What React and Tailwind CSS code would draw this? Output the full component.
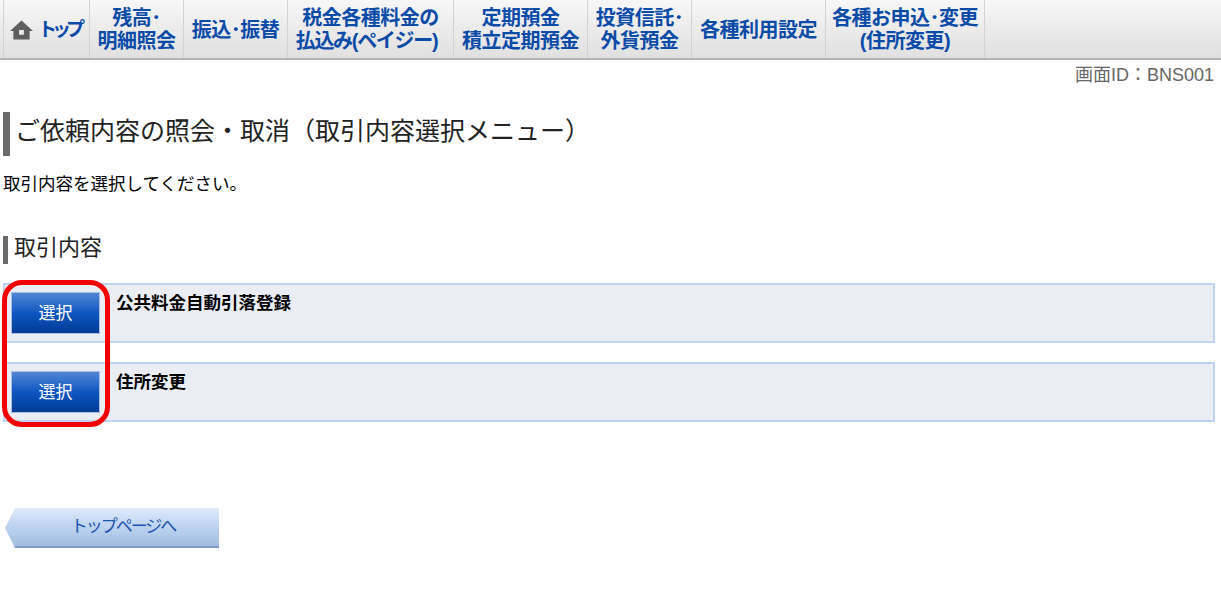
const navItems = [
  { w: "w-[94px]", lines: ["残高･", "明細照会"] },
  { w: "w-[104px]", lines: ["振込･振替"] },
  { w: "w-[166px]", lines: ["税金各種料金の", "払込み(ペイジー)"] },
  { w: "w-[134px]", lines: ["定期預金", "積立定期預金"] },
  { w: "w-[104px]", lines: ["投資信託･", "外貨預金"] },
  { w: "w-[134px]", lines: ["各種利用設定"] },
  { w: "w-[159px]", lines: ["各種お申込･変更", "(住所変更)"] },
];

const rows = ["公共料金自動引落登録", "住所変更"];

export default function App() {
  return (
    <div className="relative h-[601px] w-[1221px] overflow-hidden bg-white font-['Liberation_Sans','Noto_Sans_CJK_JP',sans-serif] text-black">
      {/* global nav */}
      <div className="flex h-[60px] border-b-2 border-[#b5b5b5] bg-gradient-to-b from-[#f7f7f7] to-[#e0e0e0] pl-[3px]">
        <div className="flex w-[87px] items-center justify-center gap-[5px] border-x border-[#d2d2d2] pt-[2px] pr-[3px]">
          <svg width="23" height="20" viewBox="0 0 24 20" className="shrink-0">
            <path fill="#5f5f5f" fillRule="evenodd" d="M12 0 24 11h-3.500v9h-17v-9H0ZM9.500 10v5h5v-5Z" />
          </svg>
          <span className="text-[19px] font-bold tracking-[-5px] text-[#0b4ba8]">トップ</span>
        </div>
        {navItems.map((item) => (
          <div
            key={item.lines[0]}
            className={`flex ${item.w} shrink-0 flex-col items-center justify-center border-r border-[#d2d2d2] pt-[2px] text-[20px] leading-[23px] font-bold tracking-[-0.5px] whitespace-nowrap text-[#0b4ba8]`}
          >
            {item.lines.map((line) => (
              <span key={line} className={line.includes("ペイジー") ? "pr-[8px] tracking-[-1.300px]" : ""}>
                {line}
              </span>
            ))}
          </div>
        ))}
      </div>

      <div className="pt-[3px] pr-[7px] text-right text-[18px] leading-[24px] text-[#666666]">画面ID：BNS001</div>

      <div className="pl-[3px]">
        <h1 className="mt-[25px] flex h-[44px] items-center border-l-[7px] border-[#6a6a6a] pb-[5px] pl-[5px] text-[25px] font-normal text-[#222222]">
          ご依頼内容の照会・取消（取引内容選択メニュー）
        </h1>
        <p className="mt-[17px] text-[17.500px] leading-[22px]">取引内容を選択してください。</p>
        <h2 className="mt-[41px] flex h-[28px] items-center border-l-[5px] border-[#6a6a6a] pb-[6px] pl-[6px] text-[22px] font-normal text-[#222222]">
          取引内容
        </h2>

        <div className="mt-[19px] flex w-[1212px] flex-col gap-[19px]">
          {rows.map((label) => (
            <div key={label} className="flex h-[60px] items-start gap-[16px] border-2 border-[#bcd4f0] bg-[#eaedf3] pt-[7px] pl-[6px]">
              <button className="flex h-[42px] w-[89px] shrink-0 items-center justify-center border border-[#a9c0e4] bg-gradient-to-b from-[#4f86d6] via-[#0f56c0] to-[#033b96] pt-[2px] text-[17px] text-white">
                選択
              </button>
              <span className="text-[17.500px] leading-[22px] font-bold">{label}</span>
            </div>
          ))}
        </div>
      </div>

      {/* red highlight */}
      <div className="absolute top-[280px] left-[2px] h-[147px] w-[108px] rounded-[20px] border-[5px] border-[#f40000]" />

      <div className="mt-[86px] ml-[5px] flex h-[40px] w-[214px] items-center justify-center border-b-2 border-[#7f9cc4] bg-gradient-to-b from-[#dfeafc] via-[#bdd2ef] to-[#a3bde0] pl-[22px] text-[17px] tracking-[-2px] text-[#1d52b0] [clip-path:polygon(0_50%,10px_0,100%_0,100%_100%,10px_100%)]">
        トップページへ
      </div>
    </div>
  );
}
